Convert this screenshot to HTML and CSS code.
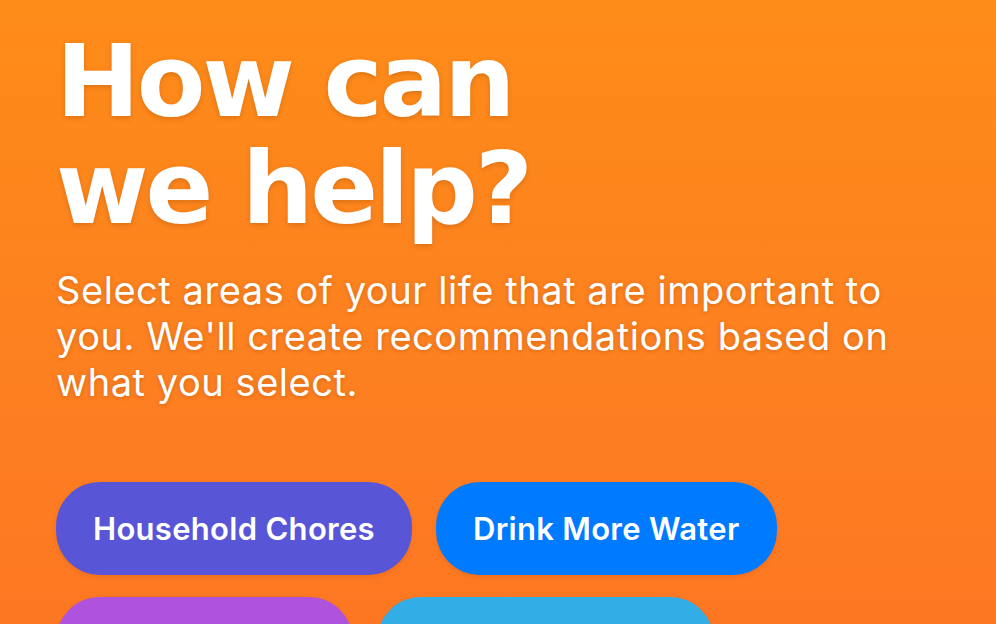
FILE: index.html
```html
<!DOCTYPE html>
<html lang="en">
<head>
<meta charset="utf-8">
<title>How can we help?</title>
<link rel="stylesheet" href="styles.css">
</head>
<body>
<main class="screen">
  <h1 class="title">How can<br>we help?</h1>
  <p class="lead">Select areas of your life that are important to you. We'll create recommendations based on what you select.</p>
  <div class="chips">
    <button class="chip chip-indigo">Household Chores</button>
    <button class="chip chip-blue">Drink More Water</button>
    <button class="chip chip-purple chip-w1">Get Outside</button>
    <button class="chip chip-cyan chip-w2">Meditate Daily</button>
  </div>
</main>
</body>
</html>
```
FILE: styles.css
```css
html, body {
  margin: 0;
  padding: 0;
  height: 100%;
  overflow: hidden;
}
body {
  background: linear-gradient(180deg, #fe8c18 0%, #fd8120 55%, #fd7722 100%);
  color: #fff;
}
.screen {
  padding: 28px 0 0 56px;
  display: flex;
  flex-direction: column;
}
.title {
  margin: 0;
  font-family: "DejaVu Sans", sans-serif;
  font-weight: 700;
  font-size: 100px;
  line-height: 107px;
  letter-spacing: -3px;
  text-shadow: 0 2px 5px rgba(120, 50, 0, 0.25);
}
.lead {
  margin: 25px 0 0 0;
  max-width: 860px;
  font-family: Inter, Roboto, sans-serif;
  font-size: 38px;
  line-height: 46px;
  letter-spacing: 0.55px;
  text-shadow: 0 1px 4px rgba(120, 50, 0, 0.3);
}
.chips {
  margin-top: 77px;
  display: flex;
  flex-wrap: wrap;
  gap: 22px 24px;
  max-width: 760px;
}
.chip {
  border: none;
  height: 93px;
  padding: 0 37px;
  border-radius: 44px;
  color: #fff;
  font-family: Inter, Roboto, sans-serif;
  font-weight: 600;
  font-size: 31px;
  letter-spacing: 0.3px;
  white-space: nowrap;
  box-shadow: 0 2px 4px rgba(120, 50, 0, 0.12);
}
.chip-indigo { background: #5856d6; }
.chip-blue { background: #007aff; }
.chip-purple { background: #af52de; }
.chip-cyan { background: #32ade6; }
.chip-w1 { width: 297px; }
.chip-w2 { width: 337px; }
```
